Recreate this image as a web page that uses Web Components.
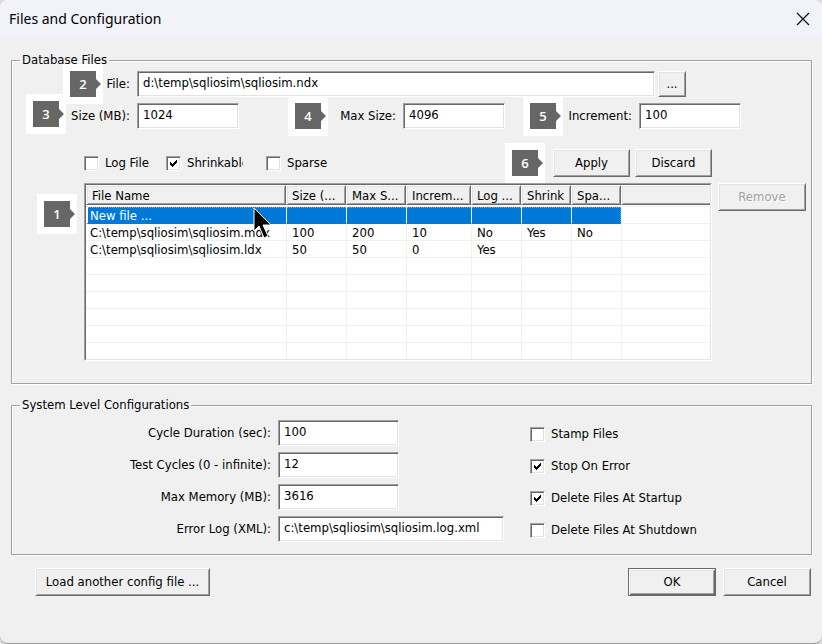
<!DOCTYPE html>
<html lang="en">
<head>
<meta charset="utf-8">
<title>Files and Configuration</title>
<style>
  html, body { height: 100%; margin: 0; }
  body {
    background: #dcdcdc;
    color: #000;
    font: 13px/16px "DejaVu Sans Condensed", "DejaVu Sans", Tahoma, sans-serif;
    --face: #f0f0f0;
    --light: #fff;
    --soft: #e3e3e3;
    --mid: #a0a0a0;
    --dark: #696969;
  }
</style>
</head>
<body>

<config-dialog></config-dialog>

<template id="t-dialog">
  <style>
    :host {
      display: flex; flex-direction: column; box-sizing: border-box; min-height: 100%;
      background: var(--face); border-bottom: 1px solid #999; border-radius: 8px; overflow: hidden;
    }
    header {
      display: flex; align-items: center; justify-content: space-between;
      height: 37px; padding: 0 12px 0 9px; background: #f1f3f9;
    }
    h1 { margin: 0; font: 14px/20px "Noto Sans", "Open Sans", sans-serif; }
    .close { display: grid; padding: 0; border: 0; background: none; }
    main { display: grid; gap: 13px; padding: 15px 10px 0 11px; }
    .row { display: grid; }
    .file { grid-template-columns: 1fr 28px; gap: 3px; padding: 3px 125px 0 0; }
    .file push-button { --height: 26px; }
    .sizes { grid-template-columns: 227fr 266fr 236fr; padding: 6px 70px 0 0; }
    .options { display: flex; align-items: center; padding: 20px 99px 0 72px; }
    .options config-check:nth-of-type(1) { width: 82px; }
    .options config-check:nth-of-type(2) { width: 77px; margin-right: 23px; }
    .actions { display: flex; gap: 5px; margin-left: auto; }
    .actions push-button { width: 77px; }
    .files { grid-template-columns: 1fr 88px; gap: 6px; align-items: start; padding: 6px 5px 22px 72px; }
    .system { display: grid; grid-template-columns: 518px 1fr; padding: 7px 0 12px; }
    .stack { display: grid; gap: 6px; align-content: start; }
    .checks { gap: 16px; padding-top: 6px; }
    footer { display: flex; gap: 7px; padding: 0 1px 0 24px; }
    footer push-button { width: 88px; }
    footer push-button:first-child { width: 175px; margin-right: auto; }
  </style>
  <header>
    <h1>Files and Configuration</h1>
    <button class="close" aria-label="Close">
      <svg width="14" height="14" viewBox="0 0 14 14" fill="none" stroke="#111" stroke-width="1.3"><path d="M1 1L13 13M13 1L1 13"/></svg>
    </button>
  </header>
  <main>
    <group-box legend="Database Files">
      <div class="row file">
        <text-field label="File:" value="d:\temp\sqliosim\sqliosim.ndx" style="--cols: 118px 1fr"><step-badge slot="badge" style="--right: 27px; --top: -12px">2</step-badge></text-field>
        <push-button>...</push-button>
      </div>
      <div class="row sizes">
        <text-field label="Size (MB):" value="1024"><step-badge slot="badge" style="--right: 64px; --top: -14px">3</step-badge></text-field>
        <text-field label="Max Size:" value="4096"><step-badge slot="badge" style="--right: 68px; --top: -12px">4</step-badge></text-field>
        <text-field label="Increment:" value="100"><step-badge slot="badge" style="--right: 69px; --top: -12px">5</step-badge></text-field>
      </div>
      <div class="row options">
        <config-check label="Log File"></config-check>
        <config-check label="Shrinkable" checked></config-check>
        <config-check label="Sparse"></config-check>
        <div class="actions">
          <push-button>Apply<step-badge slot="badge" style="--right: 85px; --top: -6px">6</step-badge></push-button>
          <push-button>Discard</push-button>
        </div>
      </div>
      <div class="row files">
        <file-list><step-badge style="--right: 634px; --top: 10px">1</step-badge></file-list>
        <push-button disabled>Remove</push-button>
      </div>
    </group-box>

    <group-box legend="System Level Configurations">
      <div class="system">
        <div class="stack" style="--cols: 259px 121px">
          <text-field label="Cycle Duration (sec):" value="100"></text-field>
          <text-field label="Test Cycles (0 - infinite):" value="12"></text-field>
          <text-field label="Max Memory (MB):" value="3616"></text-field>
          <text-field label="Error Log (XML):" value="c:\temp\sqliosim\sqliosim.log.xml" style="--cols: 259px 226px"></text-field>
        </div>
        <div class="stack checks">
          <config-check label="Stamp Files"></config-check>
          <config-check label="Stop On Error" checked></config-check>
          <config-check label="Delete Files At Startup" checked></config-check>
          <config-check label="Delete Files At Shutdown"></config-check>
        </div>
      </div>
    </group-box>

    <footer>
      <push-button>Load another config file ...</push-button>
      <push-button default>OK</push-button>
      <push-button>Cancel</push-button>
    </footer>
  </main>
</template>

<template id="t-group">
  <style>
    :host { display: block; }
    fieldset {
      margin: 0; padding: 0; border: 1px solid var(--mid); min-width: 0;
      box-shadow: 1px 1px 0 var(--light), inset 1px 1px 0 var(--light);
    }
    legend { position: relative; z-index: 2; margin-left: 8px; padding: 0 2px; }
  </style>
  <fieldset><legend></legend><slot></slot></fieldset>
</template>

<template id="t-field">
  <style>
    :host { display: grid; grid-template-columns: var(--cols, 1fr 102px); gap: 7px; align-items: center; }
    label { text-align: right; white-space: nowrap; }
    .anchor { display: grid; position: relative; min-width: 0; }
    input {
      box-sizing: border-box; width: 100%; height: 26px; margin: 0; padding: 1px 5px 4px; border: 1px solid;
      border-color: var(--mid) var(--light) var(--light) var(--mid); border-radius: 0; outline: 0;
      background: #fff; color: inherit; font: inherit;
      box-shadow: inset 1px 1px 0 var(--dark), inset -1px -1px 0 var(--soft);
    }
  </style>
  <div class="anchor"><label for="box"></label><slot name="badge"></slot></div>
  <input id="box" type="text">
</template>

<template id="t-check">
  <style>
    :host { display: block; overflow: hidden; }
    label { display: flex; align-items: center; gap: 6px; white-space: nowrap; }
    .box { display: grid; flex: none; place-items: center; }
    .box > * { grid-area: 1 / 1; }
    input {
      appearance: none; box-sizing: border-box; width: 15px; height: 15px; margin: 0; border: 1px solid;
      border-color: var(--mid) var(--light) var(--light) var(--mid); background: #fff;
      box-shadow: inset 1px 1px 0 var(--dark), inset -1px -1px 0 var(--soft);
    }
    svg { visibility: hidden; pointer-events: none; z-index: 1; }
    input:checked + svg { visibility: visible; }
  </style>
  <label><span class="box"><input type="checkbox"><svg width="7" height="7" viewBox="0 0 7 7" shape-rendering="crispEdges"><path d="M0 2h1v1h1v1h1v-1h1v-1h1v-1h1v-1h1v3h-1v1h-1v1h-1v1h-1v1h-1v-1h-1v-1h-1z"/></svg></span><span class="text"></span></label>
</template>

<template id="t-button">
  <style>
    :host { display: grid; position: relative; }
    button {
      box-sizing: border-box; width: 100%; height: var(--height, 28px); margin: 0; padding: 0 0 1px; border: 1px solid;
      border-color: var(--light) var(--dark) var(--dark) var(--light); border-radius: 0;
      background: var(--face); color: inherit; font: inherit; white-space: nowrap;
      box-shadow: inset 1px 1px 0 var(--soft), inset -1px -1px 0 var(--mid);
    }
    button:disabled { color: var(--mid); text-shadow: 1px 1px 0 #fff; }
    :host([default]) button {
      border-color: var(--dark);
      box-shadow: inset 1px 1px 0 var(--light), inset -1px -1px 0 var(--dark), inset 2px 2px 0 var(--soft), inset -2px -2px 0 var(--mid);
    }
  </style>
  <button type="button"><slot></slot></button><slot name="badge"></slot>
</template>

<template id="t-badge">
  <style>
    :host {
      position: absolute; right: var(--right); top: var(--top); z-index: 1;
      display: grid; place-items: center; width: 40px; height: 40px; background: #fff;
      color: #fff; font: 600 13px/18px "Open Sans", "Noto Sans", sans-serif;
    }
    svg { grid-area: 1 / 1; }
    span { grid-area: 1 / 1; z-index: 1; }
  </style>
  <svg width="40" height="40" viewBox="0 0 40 40" fill="#666"><path d="M7 7H33V15L38 20L33 25V33H7Z"/></svg><span><slot></slot></span>
</template>

<template id="t-list">
  <style>
    :host {
      display: block; position: relative; box-sizing: border-box; height: 178px; border: 1px solid;
      border-color: var(--mid) var(--light) var(--light) var(--mid); background: #fff;
    }
    .view { height: 174px; overflow: hidden; border: 1px solid; border-color: var(--dark) var(--soft) var(--soft) var(--dark); }
    table { width: 100%; table-layout: fixed; border-collapse: separate; border-spacing: 0; }
    th, td { box-sizing: border-box; font-weight: 400; text-align: left; white-space: nowrap; overflow: hidden; }
    th {
      height: 20px; border: 1px solid; border-color: var(--light) var(--dark) var(--dark) var(--light);
      background: var(--face); padding: 2px 0 0 5px; line-height: 16px;
      box-shadow: inset 1px 1px 0 var(--soft), inset -1px -1px 0 var(--mid);
    }
    th:last-child { border-right: 0; box-shadow: inset 1px 1px 0 var(--soft), inset 0 -1px 0 var(--mid); }
    td { height: 17px; padding: 2px 0 0 5px; border-left: 1px solid #f0f0f0; border-bottom: 1px solid #f0f0f0; line-height: 14px; }
    td:first-child { padding-left: 4px; border-left: 0; }
    .lead td { height: 2px; padding: 0; line-height: 1px; }
    .picked td:not(:last-child) {
      border-bottom-color: #0078d7; color: #fff;
      background: repeating-linear-gradient(90deg, #ff8728 0 1px, #0078d7 1px 2px) 0 0 / 100% 1px no-repeat #0078d7;
    }
    .picked td:first-child { background-clip: padding-box; padding-left: 2px; border-left: 2px solid #fff; }
    .picked td:nth-last-child(2) { border-right: 1px dotted #ff8728; }
    .cursor { position: absolute; left: 168px; top: 23px; pointer-events: none; }
  </style>
  <div class="view">
    <table>
      <colgroup><col style="width:200px"><col style="width:60px"><col style="width:60px"><col style="width:65px"><col style="width:50px"><col style="width:50px"><col style="width:50px"><col></colgroup>
      <thead><tr></tr></thead>
      <tbody></tbody>
    </table>
  </div>
  <svg class="cursor" width="20" height="34" viewBox="0 0 20 34"><path d="M1 1V24L6 19L11 31L15 29L10 18H18Z" fill="#000" stroke="#fff" stroke-width="1"/></svg>
  <slot></slot>
</template>

<script>
  class TemplateElement extends HTMLElement {
    constructor() {
      super();
      this.attachShadow({ mode: "open" });
      this.shadowRoot.append(document.getElementById(this.constructor.template).content.cloneNode(true));
    }
    part$(selector) { return this.shadowRoot.querySelector(selector); }
  }

  class StepBadge extends TemplateElement { static template = "t-badge"; }

  class GroupBox extends TemplateElement {
    static template = "t-group";
    connectedCallback() { this.part$("legend").textContent = this.getAttribute("legend"); }
  }

  class TextField extends TemplateElement {
    static template = "t-field";
    connectedCallback() {
      this.part$("label").textContent = this.getAttribute("label");
      this.part$("input").value = this.getAttribute("value");
    }
  }

  class ConfigCheck extends TemplateElement {
    static template = "t-check";
    connectedCallback() {
      this.part$(".text").textContent = this.getAttribute("label");
      this.part$("input").checked = this.hasAttribute("checked");
    }
  }

  class PushButton extends TemplateElement {
    static template = "t-button";
    connectedCallback() { this.part$("button").disabled = this.hasAttribute("disabled"); }
  }

  class FileList extends TemplateElement {
    static template = "t-list";
    static heads = ["File Name", "Size (...", "Max S...", "Increm...", "Log ...", "Shrink", "Spa...", ""];
    static rows = [
      ["New file ..."],
      ["C:\\temp\\sqliosim\\sqliosim.mdx", "100", "200", "10", "No", "Yes", "No"],
      ["C:\\temp\\sqliosim\\sqliosim.ldx", "50", "50", "0", "Yes"],
      [], [], [], [], [], []
    ];
    connectedCallback() {
      const { heads, rows } = FileList;
      for (const text of heads) {
        const th = document.createElement("th");
        th.scope = "col";
        th.textContent = text;
        this.part$("thead tr").append(th);
      }
      const body = this.part$("tbody");
      const lead = body.insertRow();
      lead.className = "lead";
      lead.insertCell().colSpan = heads.length;
      rows.forEach((row, i) => {
        const tr = body.insertRow();
        if (i === 0) tr.className = "picked";
        heads.forEach((_, c) => { tr.insertCell().textContent = row[c] ?? ""; });
      });
    }
  }

  class ConfigDialog extends TemplateElement { static template = "t-dialog"; }

  customElements.define("step-badge", StepBadge);
  customElements.define("group-box", GroupBox);
  customElements.define("text-field", TextField);
  customElements.define("config-check", ConfigCheck);
  customElements.define("push-button", PushButton);
  customElements.define("file-list", FileList);
  customElements.define("config-dialog", ConfigDialog);
</script>
</body>
</html>
